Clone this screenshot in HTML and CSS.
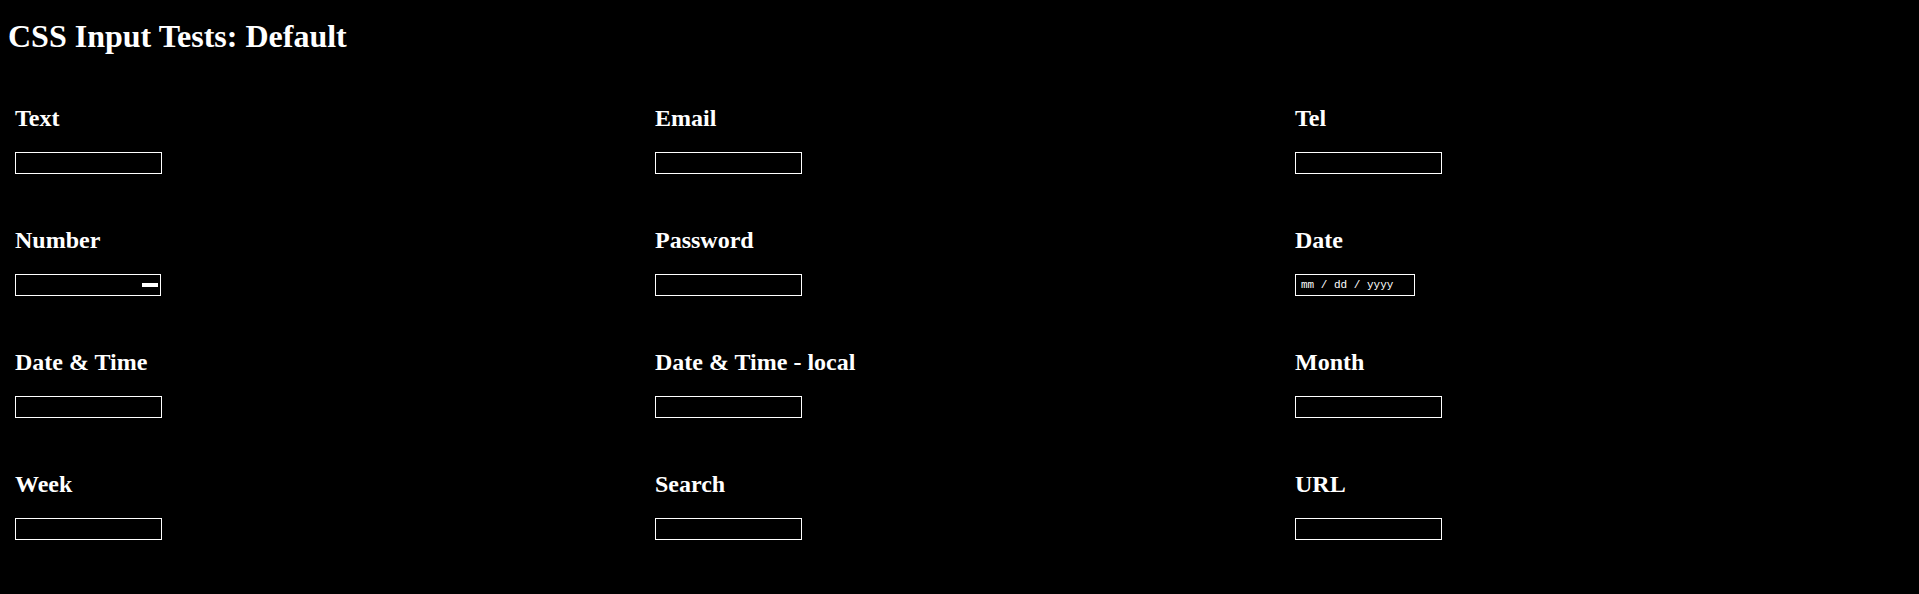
FILE: index.html
```html
<!DOCTYPE html>
<html lang="en">
<head>
<meta charset="utf-8">
<title>CSS Input Tests: Default</title>
<link rel="stylesheet" href="styles.css">
</head>
<body>
<h1 class="title">CSS Input Tests: Default</h1>
<form class="grid">
  <div class="cell"><label class="label" for="f-text">Text</label><input class="field" id="f-text" type="text"></div>
  <div class="cell"><label class="label" for="f-email">Email</label><input class="field" id="f-email" type="email"></div>
  <div class="cell"><label class="label" for="f-tel">Tel</label><input class="field" id="f-tel" type="tel"></div>

  <div class="cell"><label class="label" for="f-number">Number</label>
    <span class="field field-number"><input class="inner" id="f-number" type="text" inputmode="numeric"><span class="spin"></span></span>
  </div>
  <div class="cell"><label class="label" for="f-password">Password</label><input class="field" id="f-password" type="password"></div>
  <div class="cell"><label class="label" for="f-date">Date</label><input class="field field-date" id="f-date" type="text" placeholder="mm / dd / yyyy"></div>

  <div class="cell"><label class="label" for="f-dt">Date &amp; Time</label><input class="field" id="f-dt" type="text"></div>
  <div class="cell"><label class="label" for="f-dtl">Date &amp; Time - local</label><input class="field" id="f-dtl" type="text"></div>
  <div class="cell"><label class="label" for="f-month">Month</label><input class="field" id="f-month" type="text"></div>

  <div class="cell"><label class="label" for="f-week">Week</label><input class="field" id="f-week" type="text"></div>
  <div class="cell"><label class="label" for="f-search">Search</label><input class="field" id="f-search" type="search"></div>
  <div class="cell"><label class="label" for="f-url">URL</label><input class="field" id="f-url" type="url"></div>
</form>
</body>
</html>
```

FILE: styles.css
```css
html, body {
  background: #000;
}
body {
  margin: 0;
  padding: 8px;
  color: #fff;
  font-family: "Liberation Serif", "Times New Roman", serif;
  overflow: hidden;
}
.title {
  margin: 10px 0 0;
  font-size: 32px;
  line-height: 37px;
  font-weight: bold;
}
.grid {
  display: grid;
  grid-template-columns: 640px 640px 1fr;
  row-gap: 52px;
  margin: 49px 0 0;
  padding: 0 0 0 7px;
}
.cell {
  display: flex;
  flex-direction: column;
  align-items: flex-start;
  gap: 20px;
}
.label {
  font-size: 24px;
  line-height: 28px;
  font-weight: bold;
}
.field {
  -webkit-appearance: none;
  appearance: none;
  box-sizing: border-box;
  width: 147px;
  height: 22px;
  margin: 0;
  padding: 0 2px;
  border: 1px solid #fff;
  border-radius: 0;
  background: #000;
  color: #fff;
  font-family: "Liberation Sans", Arial, sans-serif;
  font-size: 13px;
  outline: none;
}
.field-number {
  display: flex;
  align-items: center;
  width: 146px;
  padding: 0 2px 0 0;
}
.inner {
  flex: 1;
  min-width: 0;
  height: 100%;
  margin: 0;
  padding: 0 2px;
  border: 0;
  background: transparent;
  color: #fff;
  outline: none;
}
.spin {
  width: 16px;
  height: 4px;
  background: #fff;
}
.field-date {
  width: 120px;
  padding: 0 0 0 5px;
  font-family: "Liberation Mono", "Courier New", monospace;
  font-size: 11px;
}
.field-date::placeholder {
  color: #fff;
  opacity: 1;
}
```
